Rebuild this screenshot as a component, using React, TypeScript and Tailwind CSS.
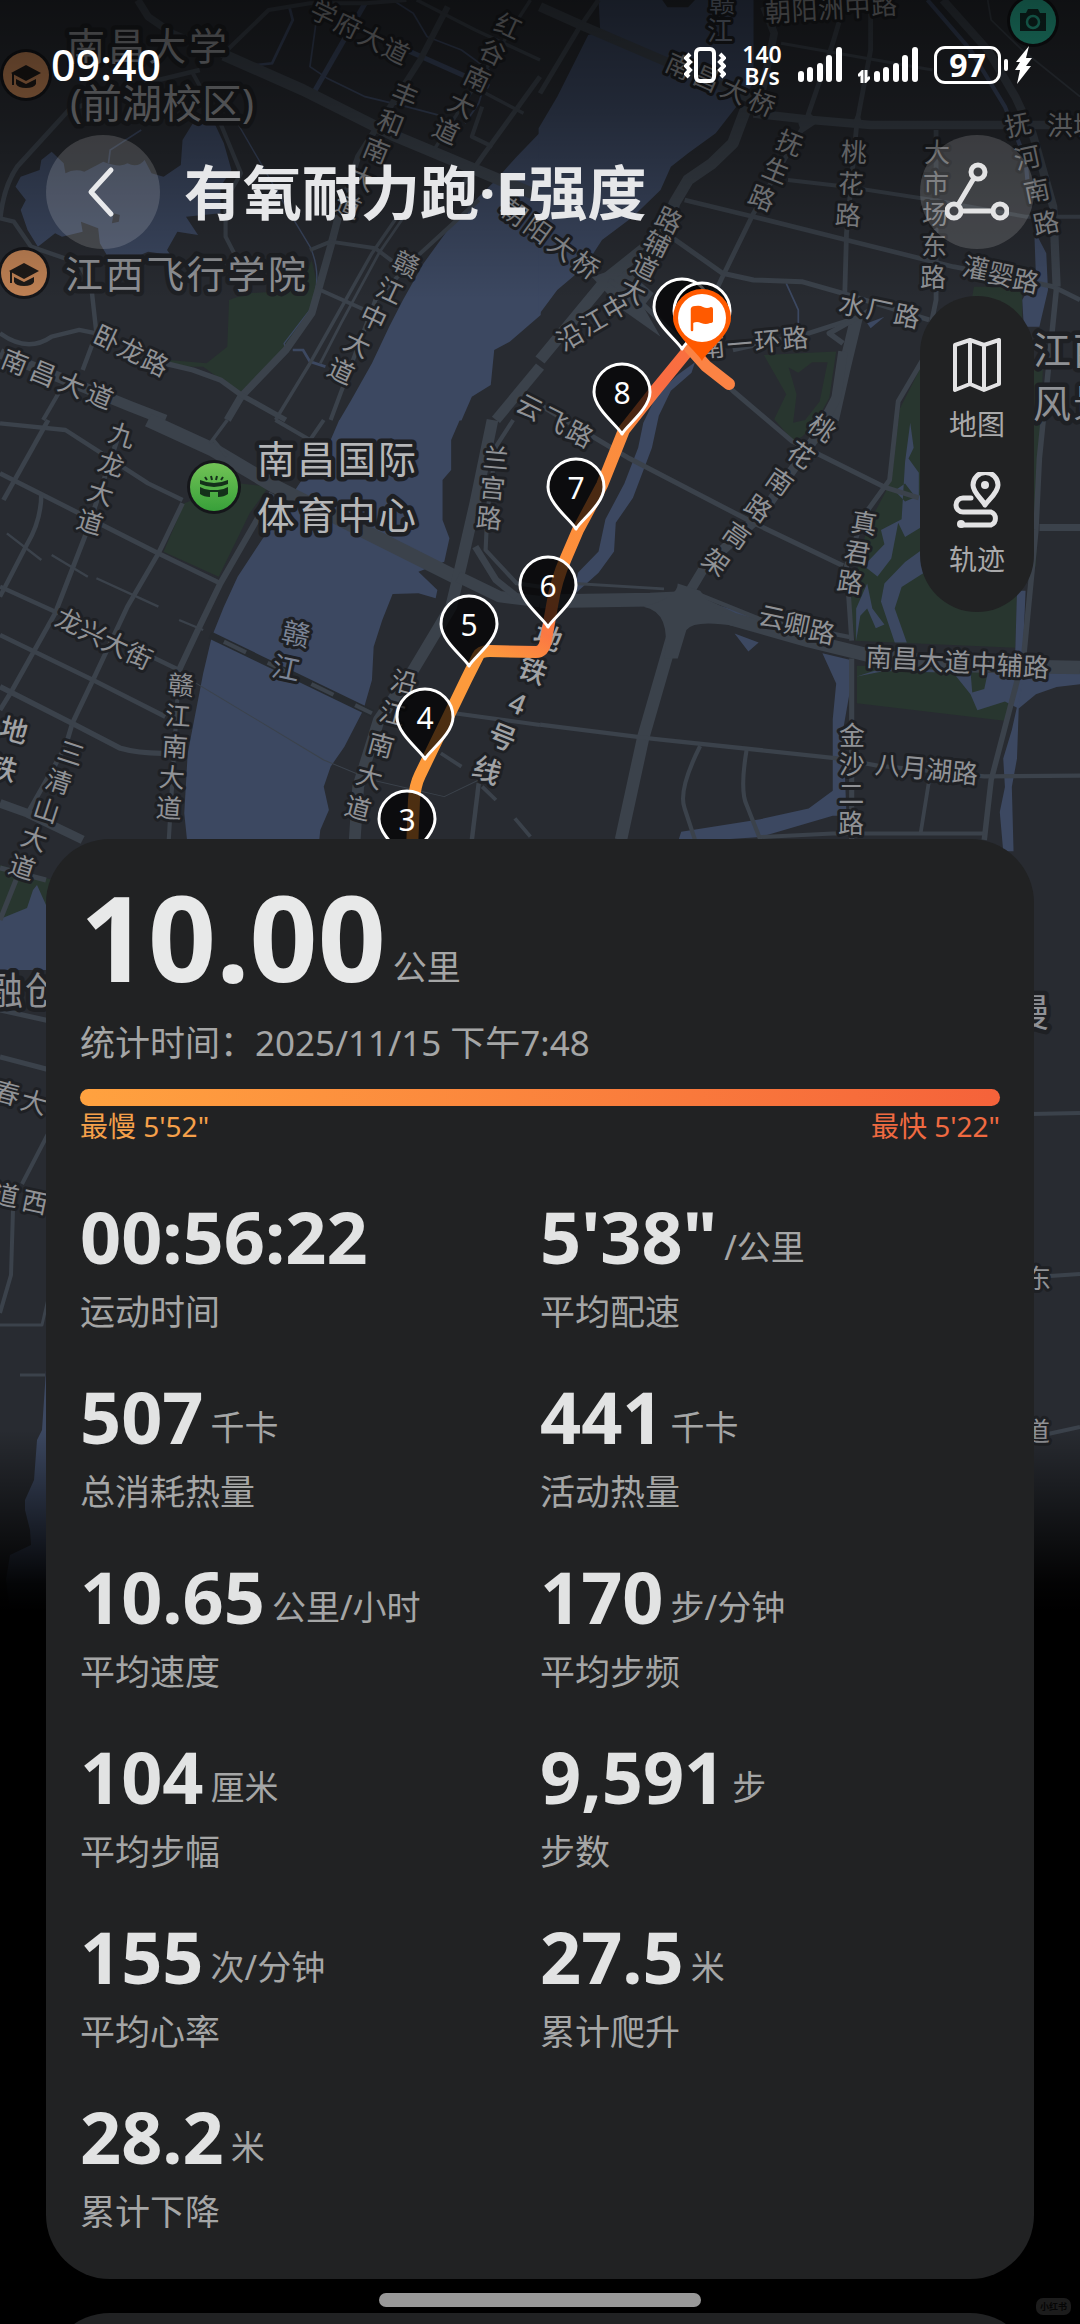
import React from "react";

const LAND = "#282b31";
const WATER = "#3c4861";
const PARK = "#28362f";
const ROAD = "#3b424b";

type Road = [d: string, width: number];

/* Each tile is drawn in its own 1568-unit grid and placed on the map canvas. */
const NW_ROADS: Road[] = [
  ["M650 165L880 270L1140 405L1568 590", 34],
  ["M0 660Q10 560 50 500L200 330L460 240L580 210", 14],
  ["M0 655L40 665L90 740L230 790L265 860L280 1000L240 1110", 13],
  ["M400 0L430 50L500 100L650 165", 22],
  ["M660 150L780 30L900 10L1060 10L1180 0", 12],
  ["M560 220L640 370L700 520L655 600L655 710L680 760", 12],
  ["M985 640L960 740L905 940L830 1050L700 1190L660 1260", 22],
  ["M900 750L960 725L1090 745L1160 800", 12],
  ["M1160 640L1080 760L960 980L900 1090L800 1260", 10],
  ["M1180 640L1100 760L990 970L930 1090", 8],
  ["M1390 600L1210 770L1090 900L960 1260", 12],
  ["M930 870L1060 930", 12],
  ["M1300 20L1220 180L1040 470L985 640", 18],
  ["M1210 0L1380 90L1568 180", 10],
  ["M1568 230L1400 470L1340 560", 14],
  ["M1410 280L1520 340", 10],
  ["M1400 320L1370 410L1430 440", 12],
  ["M1540 0L1260 450", 10],
  ["M0 1000Q80 1060 150 1010L230 990L280 1000", 13],
  ["M0 1060L380 1220L480 1260", 32],
  ["M480 1090L560 1110L640 1140L700 1185L830 1260", 16],
  ["M170 1180L125 1260", 12],
  ["M1568 1100L1440 1260", 30],
];

const NE_ROADS: Road[] = [
  ["M0 20L130 80L400 200L620 300", 28],
  ["M620 340L790 360L960 375L1568 375", 26],
  ["M600 320L560 430L500 490L430 540L390 610L370 690L200 830L0 1080", 34],
  ["M870 60L850 130L770 370L620 640L530 830L490 920", 14],
  ["M960 0L960 150L920 370L890 700L885 880", 14],
  ["M700 130L1140 210", 9],
  ["M1150 390L1150 900L1130 1000", 14],
  ["M720 540L890 560L1140 600L1410 650L1568 650", 12],
  ["M420 600L620 650L890 720L1200 800L1400 840L1490 860L1568 900", 14],
  ["M380 710L530 820L620 840L760 845L880 880L1130 960", 15],
  ["M1170 0L1300 150L1380 290L1430 400L1490 620L1500 860", 24],
  ["M1300 0L1310 60L1400 150L1568 290", 5],
  ["M650 20L680 100L640 300", 22],
  ["M170 0L110 90L0 280", 14],
  ["M560 1050L780 1000L900 960", 14],
  ["M920 950L885 1100L850 1260", 36],
  ["M960 930L840 1000L880 1030", 16],
];

const SW_ROADS: Road[] = [
  ["M0 10L190 30L310 110L430 190L530 240", 13],
  ["M430 0L620 90L800 200L1050 330L1320 470", 42],
  ["M140 0L10 240", 14],
  ["M0 160L230 280L460 400L640 490", 14],
  ["M120 220Q120 300 80 370L20 490L0 530", 13],
  ["M340 60L250 340L160 580L30 820L0 870", 14],
  ["M530 250L460 400L370 560L270 780L210 910L190 980L80 1180", 14],
  ["M790 220L640 490L570 640L520 750", 18],
  ["M0 500L170 580", 13],
  ["M0 645L270 780L480 890", 14],
  ["M400 690L520 750", 13],
  ["M0 800L210 910L350 985Q400 1000 470 1000", 16],
  ["M0 1150L80 1180L240 1260", 26],
  ["M520 750L490 1260", 12],
  ["M660 0L610 70M620 60L660 110", 10],
  ["M800 0L900 60L940 0", 12],
  ["M1430 0L1380 250L1340 430L1310 560L1200 750L1100 900L1040 1100L1030 1260", 34],
  ["M1490 0L1440 80L1415 280L1410 390L1500 490L1568 500", 12],
  ["M1330 470L1450 530L1568 545", 34],
  ["M1380 380L1440 480L1500 530", 20],
  ["M1320 880L1568 915", 12],
  ["M1390 1090L1370 1260", 13],
  ["M1280 1000L1340 1040M1400 1100L1440 1140M1495 1195L1540 1250", 11],
  ["M570 790L940 1020L1080 1080L1290 1130L1390 1080", 3],
  ["M20 340L120 420M150 405L255 470M280 475L460 560M520 600L590 630", 7],
];

const SE_ROADS: Road[] = [
  ["M200 0L290 60L430 190L560 310L730 450L1000 580L1100 610", 14],
  ["M880 200L860 330L800 440L640 660L480 800L430 880", 28],
  ["M420 880L390 980L300 1280L235 1568", 36],
  ["M0 350L260 500L620 680L880 800", 14],
  ["M0 900L320 895L430 890L560 950L780 1010L950 1050L1250 1080L1568 1085", 38],
  ["M460 880L640 950L900 1000", 12],
  ["M100 850L360 865", 8],
  ["M0 1245L330 1285L870 1340L980 1360L1290 1390L1568 1388", 12],
  ["M465 1305Q400 1430 420 1480L450 1568", 12],
  ["M600 1315Q580 1430 600 1470L640 1568", 12],
  ["M905 1060L905 1568", 15],
  ["M1150 160L1040 340L1015 560L940 660L890 800L905 1010", 14],
  ["M1500 20L1450 500L1440 700L1405 1050L1310 1400L1290 1568", 16],
  ["M1450 693L1568 693", 20],
  ["M1130 1400L1105 1550M640 1560L850 1550L1290 1550", 11],
];

function Roads({ items }: { items: Road[] }) {
  return (
    <g fill="none" stroke={ROAD} strokeLinejoin="round">
      {items.map(([d, w]) => (
        <path key={d} d={d} strokeWidth={w} />
      ))}
    </g>
  );
}

type LabelDef = {
  t: string;
  a: [number, number];
  b: [number, number];
  r?: number;
  s?: number;
  c?: string;
  w?: number;
};

const LABELS: LabelDef[] = [
  { t: "南昌大学", a: [86, 46], b: [208, 46], s: 38 },
  { t: "江西飞行学院", a: [84, 274], b: [287, 274], s: 38 },
  { t: "学府大道", a: [324, 13], b: [396, 51], r: 26 },
  { t: "红谷南大道", a: [508, 26], b: [446, 131], r: 25 },
  { t: "丰和南大道", a: [405, 95], b: [348, 206], r: 22 },
  { t: "赣江中大道", a: [406, 264], b: [341, 371], r: 25 },
  { t: "卧龙路", a: [107, 338], b: [155, 363], r: 25 },
  { t: "南昌大道", a: [15, 362], b: [100, 396], r: 22 },
  { t: "云飞路", a: [530, 407], b: [580, 434], r: 27 },
  { t: "朝阳大桥", a: [514, 212], b: [586, 265], r: 36 },
  { t: "赣江", a: [722, 2], b: [720, 30], c: "#7b8496" },
  { t: "朝阳洲中路", a: [778, 12], b: [884, 5], r: -3 },
  { t: "南昌大桥", a: [679, 66], b: [762, 103], r: 24 },
  { t: "抚生路", a: [790, 143], b: [762, 198], r: 22 },
  { t: "桃花路", a: [854, 152], b: [848, 215], r: 3 },
  { t: "大市场东路", a: [937, 152], b: [933, 277] },
  { t: "抚河南路", a: [1018, 125], b: [1046, 223], r: -12 },
  { t: "洪城", a: [1060, 125], b: [1086, 125] },
  { t: "灌婴路", a: [976, 268], b: [1026, 281], r: 12 },
  { t: "水厂路", a: [852, 305], b: [907, 316], r: 12 },
  { t: "南一环路", a: [712, 347], b: [795, 338], r: -5 },
  { t: "沿江中", a: [570, 337], b: [616, 307], r: -30 },
  { t: "大道辅路", a: [633, 291], b: [669, 220], r: 26 },
  { t: "桃花南路高架", a: [822, 428], b: [716, 562], r: 35 },
  { t: "真君路", a: [864, 523], b: [850, 582], r: 9 },
  { t: "云卿路", a: [772, 617], b: [822, 632], r: 12 },
  { t: "南昌大道中辅路", a: [879, 657], b: [1036, 667], r: 3 },
  { t: "金沙二路", a: [852, 735], b: [851, 823] },
  { t: "八月湖路", a: [888, 765], b: [965, 773], r: 5 },
  { t: "江西", a: [1052, 350], b: [1092, 350], s: 38 },
  { t: "风景", a: [1052, 403], b: [1092, 403], s: 38 },
  { t: "地铁4号线", a: [548, 637], b: [487, 770], r: 22, s: 28, c: "#a0a2a5", w: 500 },
  { t: "九龙大道", a: [122, 435], b: [90, 522], r: 17 },
  { t: "龙兴大街", a: [69, 621], b: [139, 656], r: 25 },
  { t: "南昌国际", a: [276, 459], b: [397, 459], s: 38, c: "#b5b6b8" },
  { t: "体育中心", a: [276, 515], b: [397, 515], s: 38, c: "#b5b6b8" },
  { t: "兰宫路", a: [496, 458], b: [489, 518], r: 5 },
  { t: "赣江", a: [296, 634], b: [286, 668], r: 12, s: 28, c: "#7b8496" },
  { t: "赣江南大道", a: [181, 685], b: [169, 808], r: 4 },
  { t: "沿江南大道", a: [404, 682], b: [358, 808], r: 15 },
  { t: "三清山大道", a: [71, 753], b: [22, 867], r: 18 },
  { t: "地铁", a: [14, 730], b: [3, 768], r: 15, s: 28, c: "#a0a2a5", w: 500 },
  { t: "融创", a: [4, 990], b: [44, 990], s: 38 },
  { t: "春大", a: [7, 1093], b: [34, 1102], r: 15 },
  { t: "道西", a: [6, 1195], b: [35, 1202], r: 12 },
  { t: "漫", a: [1030, 1012], b: [1030, 1012], s: 38 },
  { t: "东", a: [1038, 1278], b: [1038, 1278] },
  { t: "道", a: [1037, 1431], b: [1037, 1431] },
];

function MapLabel({ t, a, b, r = 0, s = 26, c = "#909296", w = 400 }: LabelDef) {
  const chars = [...t];
  const steps = Math.max(chars.length - 1, 1);
  return (
    <g fontSize={s} fill={c} fontWeight={w} strokeWidth={s > 30 ? 9 : 6}>
      {chars.map((ch, i) => {
        const x = a[0] + ((b[0] - a[0]) * i) / steps;
        const y = a[1] + ((b[1] - a[1]) * i) / steps;
        return (
          <text key={i} transform={`translate(${x} ${y}) rotate(${r})`} y={s * 0.37}>
            {ch}
          </text>
        );
      })}
    </g>
  );
}

function Pin({ x, top, n }: { x: number; top: number; n?: string }) {
  return (
    <g transform={`translate(${x} ${top})`}>
      <path
        d="M0 70C-4 62 -28 45 -28 28A28 28 0 0 1 28 28C28 45 4 62 0 70Z"
        fill="#000"
        fillOpacity="0.7"
        stroke="#fff"
        strokeWidth="3"
        strokeLinejoin="round"
      />
      {n && (
        <text y="40" fontSize="30" fill="#fff" textAnchor="middle">
          {n}
        </text>
      )}
    </g>
  );
}

function CapIcon({ x, y }: { x: number; y: number }) {
  return (
    <g transform={`translate(${x} ${y})`}>
      <circle r="26" fill="#15161a" />
      <circle r="23" fill="#bf8154" />
      <path d="M0 -10L15 -2L0 6L-15 -2Z" fill="#1e1a18" />
      <path d="M-10 4L0 9L10 4V9Q8 13 0 13Q-8 13 -10 9Z" fill="#1e1a18" />
      <path d="M-13 -2V10" stroke="#1e1a18" strokeWidth="2" />
    </g>
  );
}

function TrackMap() {
  return (
    <svg
      viewBox="0 0 1080 1610"
      className="absolute inset-x-0 top-0 w-full"
      role="img"
      aria-label="跑步轨迹地图"
    >
      <defs>
        <linearGradient id="shade" x1="0" y1="0" x2="0" y2="1">
          <stop offset="0" stopColor="#000" stopOpacity="0.62" />
          <stop offset="0.35" stopColor="#000" stopOpacity="0.45" />
          <stop offset="1" stopColor="#000" stopOpacity="0" />
        </linearGradient>
        <linearGradient id="fade" x1="0" y1="0" x2="0" y2="1">
          <stop offset="0" stopColor="#000" stopOpacity="0" />
          <stop offset="0.85" stopColor="#000" stopOpacity="0.93" />
          <stop offset="1" stopColor="#000" />
        </linearGradient>
        <linearGradient id="track" gradientUnits="userSpaceOnUse" x1="415" y1="850" x2="690" y2="348">
          <stop offset="0" stopColor="#fd9a3b" />
          <stop offset="0.36" stopColor="#fd9a3c" />
          <stop offset="0.44" stopColor="#fb7843" />
          <stop offset="0.56" stopColor="#fd8f3a" />
          <stop offset="0.82" stopColor="#fb8c3f" />
          <stop offset="0.92" stopColor="#f96b42" />
          <stop offset="1" stopColor="#f9703f" />
        </linearGradient>
        <linearGradient id="poi" x1="0" y1="0" x2="0" y2="1">
          <stop offset="0" stopColor="#72c356" />
          <stop offset="1" stopColor="#38a03a" />
        </linearGradient>
      </defs>

      <rect width="1080" height="1610" fill={LAND} />

      <g transform="scale(.3444 .3333)">
        <path
          fill={WATER}
          d="M150 455L185 490L190 520Q215 505 245 515L300 485Q350 505 370 490Q400 505 420 480L440 520L475 530L525 495L530 420L560 370L625 375L650 430L672 510L640 560L640 640L540 650L575 705L515 695L485 750L495 765L430 755L330 800L290 730L285 685L235 665L240 695L180 710L160 700L110 740L80 690L60 630L75 600L45 560L60 530L115 510L120 480Z"
        />
        <path fill={LAND} d="M330 640L348 645L345 665L325 670Z" />
        <path
          fill={WATER}
          d="M1570 395L1500 470L1440 540L1390 590L1300 690L1230 790L1170 900L1130 980L1080 1090L1020 1200L985 1262L1340 1262L1370 1190L1425 1155L1435 1050L1480 1025L1570 945Z"
        />
        <path
          fill={PARK}
          d="M905 780L925 870L880 970L820 1050L700 1175L630 1130L590 1100L490 1100L490 1080L600 1090L660 1040L665 900L720 880L870 870Z"
        />
        <g fill="none" stroke={WATER}>
          <path d="M690 370L830 620L900 740Q940 830 900 930L825 1030L830 1050" strokeWidth="4" />
          <path d="M1060 10L910 280" strokeWidth="15" />
          <path d="M1180 150L1420 260" strokeWidth="15" />
          <path d="M840 20L850 60L790 190L745 195" strokeWidth="8" />
          <path d="M920 50L900 200L950 235L1060 290L1180 320L1290 350M1140 0L1200 40L1240 110L1340 150L1420 210L1390 310L1350 370M410 390L350 430L320 450L315 490" strokeWidth="5" />
          <path d="M850 1050L880 1050L900 1085L945 1100" strokeWidth="8" />
        </g>
        <Roads items={NW_ROADS} />
      </g>

      <g transform="translate(540 0) scale(.3444 .3333)">
        <path
          fill={WATER}
          d="M170 0L620 0L620 250L570 320L510 400L430 460L380 500L350 570L270 650L180 720L130 800L50 870L-4 945L-4 385L50 290L140 105L175 95Z"
        />
        <path fill={LAND} d="M355 0L370 22H430L450 0Z" />
        <path fill={WATER} d="M1435 690L1470 760L1475 870L1450 980L1405 980L1400 900L1440 830Z" />
        <path fill={PARK} d="M1260 860L1400 860V980H1240Z" />
        <g fill="none" stroke={WATER}>
          <path d="M1125 0L1250 150L1350 320L1410 480L1420 600" strokeWidth="12" />
          <path d="M715 850L750 930V1000" strokeWidth="5" />
        </g>
        <path fill={ROAD} d="M150 830L240 800L330 880L300 920L350 1010L240 930Z" />
        <Roads items={NE_ROADS} />
        <path fill={ROAD} d="M750 370L780 335L810 365L760 400ZM905 375L922 335L940 375Z" />
        <path fill={WATER} d="M950 970L1000 950L960 985Z" />
      </g>

      <g transform="translate(0 420) scale(.3444 .3333)">
        <path
          fill={WATER}
          d="M985 0L1335 0L1310 60L1310 150L1285 180L1285 300L1305 355L1290 425L1215 455L1270 510L1265 535L1215 520L1140 522L1110 600L1085 680L1080 780L1055 870L1000 980L960 1040L940 1100L955 1170L930 1230L925 1280L545 1280L535 1180L545 1000L590 760L615 650L650 560L690 470L760 360L800 300L870 190L960 60Z"
        />
        <path fill={PARK} d="M535 250L690 190L780 200L725 280L635 470L475 395Z" />
        <path d="M610 645L1080 880" stroke="#262a2f" strokeWidth="22" />
        <path d="M650 665L1080 880" stroke={ROAD} strokeWidth="12" strokeDasharray="72 70" />
        <Roads items={SW_ROADS} />
      </g>

      <g transform="translate(540 280) scale(.3444 .3571)">
        <path
          fill={PARK}
          d="M650 210L860 200L840 330L800 400L760 440L735 450L680 390L715 320Z"
        />
        <path fill={LAND} d="M722 245L750 260L790 230L835 230L812 340L770 392L735 400L745 320Z" />
        <path
          fill={PARK}
          d="M1150 160L1045 360L1020 560L1000 600L950 690L900 900L915 1010L1380 1030L1385 880L1440 800L1460 250Z"
        />
        <path fill={PARK} d="M920 1080L1250 1090L1390 1120L1355 1235L920 1185Z" />
        <g fill={WATER}>
          <path d="M450 230L440 260L380 310L345 380L325 470L270 610L220 680L215 760L170 820L100 880L110 820L170 760L190 670L245 570L285 470L300 400L340 320L400 265Z" />
          <path d="M820 1045L905 1065L900 1150L880 1260L890 1500L850 1500L640 1560L400 1575L410 1545L640 1510L780 1480L850 1430L850 1230L860 1130Z" />
          <path d="M1075 400L1085 470L1070 500L1100 540V620L1060 570L1030 590L1060 620L1110 600V690L1060 720L1040 680L1020 780L980 830L940 800L1000 740L990 700L1050 670L1060 510Z" />
          <path d="M1110 755L1115 820L1050 860L1030 920L1065 1015L1030 1015L990 900L1000 850L1060 790Z" />
          <path d="M950 850L965 920L1000 965L975 975L950 920L930 940L918 1010V920Z" />
          <path d="M1385 870L1410 870L1402 1050L1380 1040Z" />
          <path d="M920 1110L1000 1095L1200 1100L1250 1160L1270 1205L1350 1180L1390 1200L1440 1160L1500 1140L1568 1132V1100L1300 1100L1290 1145L1255 1155L1250 1095L1000 1085Z" />
          <path d="M1400 1130L1370 1260L1345 1340L1350 1420L1335 1490L1345 1600L1375 1600L1370 1420L1385 1340L1390 1200Z" />
          <path d="M565 990L605 1040L635 1015ZM480 900L760 980L780 990L640 965Z" />
        </g>
        <Roads items={SE_ROADS} />
        <path
          fill={ROAD}
          d="M300 915Q400 890 400 850L465 870Q510 930 570 970Q450 950 425 980L400 1060L360 1060Q385 930 300 915Z"
        />
      </g>

      <path fill={PARK} d="M0 865L60 882V970H0Z" />
      <path fill={WATER} d="M0 919L27 908L33 890L37 885L46 905L60 905V970H0Z" />
      <path
        fill={WATER}
        d="M60 1370H46L42 1430L37 1440L34 1480L25 1500V1510L30 1530L31 1545L10 1555L6 1580L10 1610H60Z"
      />
      <Roads
        items={[
          ["M0 868L46 880M16 880L0 920", 5],
          ["M0 1010L50 1021M0 1057L50 1070", 5],
          ["M50 1130L22 1184M13 1210L11 1275L0 1313", 4],
          ["M0 1325H42L50 1290M20 1375H45", 3],
          ["M1030 1114L1080 1113M1050 1276L1080 1274M1048 1434L1080 1427", 4],
        ]}
      />

      <g
        fontFamily="'Noto Sans','Noto Sans CJK SC',sans-serif"
        textAnchor="middle"
        stroke="#1e2024"
        strokeLinejoin="round"
        paintOrder="stroke"
      >
        {LABELS.map((l, i) => (
          <MapLabel key={i} {...l} />
        ))}
        <text x="162" y="118" fontSize="40" fill="#909296" strokeWidth="9">
          (前湖校区)
        </text>
      </g>

      <CapIcon x={26} y={75} />
      <CapIcon x={24} y={273} />
      <g transform="translate(214 487)">
        <circle r="27" fill="#15161a" />
        <circle r="24" fill="url(#poi)" />
        <path d="M-14 -7Q0 -1 14 -7V-3Q0 3 -14 -3Z" fill="#14301a" />
        <path d="M-14 0Q-9 3 -4 3V10Q-10 10 -14 7ZM14 0Q9 3 4 3V10Q10 10 14 7ZM-4 3H4V5H-4Z" fill="#14301a" />
        <path d="M-9 -10L-7 -7M-3 -11L-2 -7M3 -11L2 -7M9 -10L7 -7" stroke="#14301a" strokeWidth="2" />
      </g>
      <g transform="translate(1033 21)">
        <circle r="26" fill="#15161a" />
        <circle r="23" fill="#2cc2a2" />
        <path d="M-13 -8H-7L-5 -12H5L7 -8H13V10H-13Z" fill="#143430" />
        <circle r="6" cy="1" fill="none" stroke="#2cc2a2" strokeWidth="2.5" />
      </g>

      <rect width="1080" height="300" fill="url(#shade)" />

      <g fill="none" strokeLinecap="round" strokeLinejoin="round" strokeWidth="12">
        <path
          d="M412 850L414 800Q415 785 420 775L466 680L478 656Q480 651 490 651L536 652Q544 652 546 640L552 606Q556 580 566 558L578 530L602 485L624 430L654 392L690 348"
          stroke="url(#track)"
        />
        <path d="M690 348L706 366L729 384" stroke="#fb8344" />
      </g>
      <g fontFamily="'Noto Sans',sans-serif">
        <Pin x={407} top={791} n="3" />
        <Pin x={425} top={689} n="4" />
        <Pin x={469} top={596} n="5" />
        <Pin x={548} top={557} n="6" />
        <Pin x={576} top={459} n="7" />
        <Pin x={622} top={364} n="8" />
        <Pin x={682} top={279} />
        <Pin x={702} top={283} />
      </g>
      <g transform="translate(702 318)">
        <path d="M0 43C-4 34 -29 17 -29 0A29 29 0 0 1 29 0C29 17 4 34 0 43Z" fill="#ff5a00" />
        <circle r="24" fill="#fff" />
        <path d="M-10 12V-9" stroke="#ff5a00" strokeWidth="2.5" strokeLinecap="round" />
        <path d="M-11 -9Q-11 -12 -7 -12Q-2 -13 1 -11Q5 -9 9 -11Q11 -11 11 -9V3Q11 5 8 5Q4 7 -1 5Q-5 3 -9 5H-11Z" fill="#ff5a00" />
      </g>

      <rect y="1430" width="1080" height="181" fill="url(#fade)" />
    </svg>
  );
}

function Signal() {
  return (
    <svg width="44" height="36" viewBox="0 0 44 36" fill="#fff" aria-hidden="true">
      <rect x="0" y="24" width="6" height="11" rx="3" />
      <rect x="9" y="20" width="6" height="15" rx="3" />
      <rect x="19" y="16" width="6" height="19" rx="3" />
      <rect x="28" y="8" width="6" height="27" rx="3" />
      <rect x="38" y="0" width="6" height="35" rx="3" />
    </svg>
  );
}

function StatusBar() {
  return (
    <div className="flex h-[130px] items-center justify-between pr-12 pl-[51px] text-white">
      <span className="text-[43px] leading-[60px] font-medium">09:40</span>
      <div className="flex items-center gap-4">
        <svg width="42" height="36" viewBox="0 0 42 36" fill="none" stroke="#fff" strokeWidth="4" aria-hidden="true">
          <rect x="12" y="2" width="18" height="32" rx="4" />
          <path d="M6 7L2 11L6 15L2 19L6 23L2 27L5 30M36 7L40 11L36 15L40 19L36 23L40 27L37 30" strokeWidth="4" />
        </svg>
        <div className="flex w-10 flex-col text-center text-[23px] leading-[22px] font-semibold">
          <span>140</span>
          <span>B/s</span>
        </div>
        <Signal />
        <div className="flex items-end gap-1">
          <svg width="12" height="13" viewBox="0 0 12 13" fill="none" stroke="#fff" strokeWidth="3" aria-hidden="true">
            <path d="M4 13V2L0 6M8 0V11L12 7" />
          </svg>
          <Signal />
        </div>
        <div className="flex items-center gap-[7px]">
          <div className="flex items-center gap-[3px]">
            <span className="flex h-[38px] w-[67px] items-center justify-center rounded-[11px] border-[3px] border-white text-[32px] leading-[32px] font-bold">
              97
            </span>
            <span className="h-3 w-1 rounded-full bg-white" />
          </div>
          <svg width="17" height="38" viewBox="0 0 17 38" fill="#fff" aria-hidden="true">
            <path d="M14 0L1 16H5L0 24H5L2 38L16 20H11L17 12H11Z" />
          </svg>
        </div>
      </div>
    </div>
  );
}

const ROUND_BUTTON =
  "flex size-[114px] shrink-0 items-center justify-center rounded-full bg-white/15";

function Header() {
  return (
    <header className="mt-[5px] flex items-center px-[46px]">
      <button type="button" aria-label="返回" className={ROUND_BUTTON}>
        <svg width="64" height="64" viewBox="0 0 64 64" fill="none" stroke="#e8e9eb" strokeWidth="5" strokeLinecap="round" strokeLinejoin="round">
          <path d="M40 10L20 32L40 54" />
        </svg>
      </button>
      <h1 className="ml-6 flex-1 text-[59px] leading-[80px] font-bold text-[#e6e7e9]">
        有氧耐力跑·E强度
      </h1>
      <button type="button" aria-label="分享轨迹" className={ROUND_BUTTON}>
        <svg width="64" height="64" viewBox="0 0 64 64" fill="none" stroke="#e3e3e4" strokeWidth="5">
          <circle cx="33" cy="12" r="7" />
          <circle cx="9" cy="51" r="7" />
          <circle cx="55" cy="51" r="7" />
          <path d="M29 18L13 45M16 51H48" />
        </svg>
      </button>
    </header>
  );
}

function MapTools() {
  return (
    <nav className="mr-[46px] mt-[47px] flex w-[114px] flex-col items-center gap-7 self-end rounded-full bg-[#212223] pt-[41px] pb-[33px] text-[28px] leading-10 text-[#a9a9aa]">
      <button type="button" className="flex flex-col items-center gap-[11px]">
        <svg width="48" height="56" viewBox="0 0 48 56" fill="none" stroke="#e3e3e4" strokeWidth="4" strokeLinejoin="round">
          <path d="M2 8L17 3L31 8L46 3V47L31 53L17 47L2 53ZM17 3V47M31 8V53" />
        </svg>
        地图
      </button>
      <button type="button" className="flex flex-col items-center gap-[11px]">
        <svg width="48" height="56" viewBox="0 0 48 56" fill="none" stroke="#e3e3e4" strokeWidth="5" strokeLinecap="round">
          <path d="M32 33C30 28 20 21 20 13A12 12 0 0 1 45 13C45 21 35 28 32 33Z" strokeLinejoin="round" />
          <circle cx="32" cy="13" r="4" fill="#e3e3e4" stroke="none" />
          <path d="M18 26H10A7 7 0 0 0 10 40H38A7 7 0 0 1 38 53H9" />
          <circle cx="8" cy="52" r="4" fill="#e3e3e4" stroke="none" />
        </svg>
        轨迹
      </button>
    </nav>
  );
}

const STATS: { value: string; unit?: string; label: string }[] = [
  { value: "00:56:22", label: "运动时间" },
  { value: "5'38\"", unit: "/公里", label: "平均配速" },
  { value: "507", unit: "千卡", label: "总消耗热量" },
  { value: "441", unit: "千卡", label: "活动热量" },
  { value: "10.65", unit: "公里/小时", label: "平均速度" },
  { value: "170", unit: "步/分钟", label: "平均步频" },
  { value: "104", unit: "厘米", label: "平均步幅" },
  { value: "9,591", unit: "步", label: "步数" },
  { value: "155", unit: "次/分钟", label: "平均心率" },
  { value: "27.5", unit: "米", label: "累计爬升" },
  { value: "28.2", unit: "米", label: "累计下降" },
];

function Stat({ value, unit, label }: { value: string; unit?: string; label: string }) {
  return (
    <div className="flex flex-col-reverse gap-4">
      <dt className="text-[35px] leading-10 text-[#a5a6a6]">{label}</dt>
      <dd className="flex items-end gap-[7px]">
        <span className="text-[72px] leading-[80px] font-bold text-[#e2e3e3]">{value}</span>
        {unit && <span className="text-[34px] leading-[58px] text-[#a5a6a6]">{unit}</span>}
      </dd>
    </div>
  );
}

function SummaryCard() {
  return (
    <section className="mx-[46px] mt-[227px] rounded-[64px] bg-[#212223] px-[34px] pt-[37px] pb-[47px]">
      <p className="flex items-end gap-[7px]">
        <span className="text-[119px] leading-[120px] font-bold text-[#e8e9e9]">10.00</span>
        <span className="text-[34px] leading-[58px] text-[#a5a6a6]">公里</span>
      </p>
      <p className="mt-[22px] text-[35px] leading-[50px] text-[#a5a6a6]">
        统计时间：2025/11/15 下午7:48
      </p>
      <div className="mt-[21px] h-[17px] rounded-full bg-linear-to-r from-[#ffa23f] to-[#f5623a]" />
      <div className="flex justify-between text-[28px] leading-10">
        <span className="text-[#f5a04a]">最慢 5'52"</span>
        <span className="text-[#ef6a41]">最快 5'22"</span>
      </div>
      <dl className="mt-[50px] grid grid-cols-2 gap-y-11">
        {STATS.map((s) => (
          <Stat key={s.label} {...s} />
        ))}
      </dl>
    </section>
  );
}

export default function App() {
  return (
    <main className="relative flex min-h-screen flex-col overflow-hidden bg-black font-['Noto_Sans','Noto_Sans_CJK_SC',sans-serif]">
      <TrackMap />
      <div className="relative flex flex-1 flex-col">
        <StatusBar />
        <Header />
        <MapTools />
        <SummaryCard />
        <div className="flex h-[34px] justify-center pt-[14px]">
          <div className="h-[14px] w-[322px] rounded-full bg-[#999999]" />
        </div>
        <div className="mx-[46px] flex-1 basis-0 overflow-hidden">
          <div className="h-32 rounded-[64px] bg-[#212223]" />
        </div>
      </div>
      <span className="absolute right-[9px] bottom-[9px] rounded-[7px] bg-[#1c1c1c] px-1 text-[9px] leading-[17px] font-bold text-[#050505]">
        小红书
      </span>
    </main>
  );
}
